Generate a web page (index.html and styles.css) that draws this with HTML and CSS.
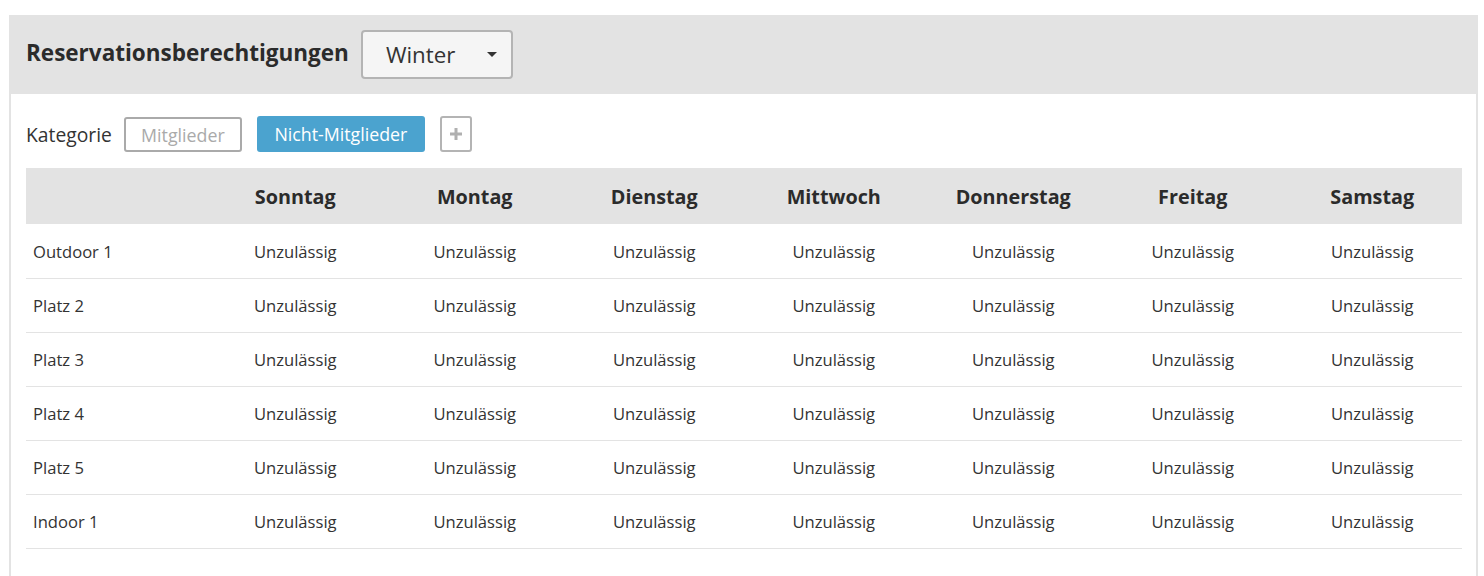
FILE: index.html
```html
<!DOCTYPE html>
<html lang="de">
<head>
<meta charset="utf-8">
<title>Reservationsberechtigungen</title>
<link rel="stylesheet" href="styles.css">
</head>
<body>
<div class="panel">
  <div class="panel-head">
    <h1 class="title">Reservationsberechtigungen</h1>
    <div class="select">
      <span class="select-value">Winter</span>
      <span class="caret"></span>
    </div>
  </div>
  <div class="panel-body">
    <div class="cat-row">
      <span class="cat-label">Kategorie</span>
      <button class="btn btn-outline">Mitglieder</button>
      <button class="btn btn-primary">Nicht-Mitglieder</button>
      <button class="btn btn-add" aria-label="Hinzufügen">
        <svg width="14" height="14" viewBox="0 0 14 14"><path d="M5.5 1h3v4.5H13v3H8.5V13h-3V8.5H1v-3h4.5z" fill="#b0b0b0"/></svg>
      </button>
    </div>
    <table class="grid">
      <thead>
        <tr>
          <th></th><th>Sonntag</th><th>Montag</th><th>Dienstag</th><th>Mittwoch</th><th>Donnerstag</th><th>Freitag</th><th>Samstag</th>
        </tr>
      </thead>
      <tbody>
        <tr><td>Outdoor 1</td><td>Unzulässig</td><td>Unzulässig</td><td>Unzulässig</td><td>Unzulässig</td><td>Unzulässig</td><td>Unzulässig</td><td>Unzulässig</td></tr>
        <tr><td>Platz 2</td><td>Unzulässig</td><td>Unzulässig</td><td>Unzulässig</td><td>Unzulässig</td><td>Unzulässig</td><td>Unzulässig</td><td>Unzulässig</td></tr>
        <tr><td>Platz 3</td><td>Unzulässig</td><td>Unzulässig</td><td>Unzulässig</td><td>Unzulässig</td><td>Unzulässig</td><td>Unzulässig</td><td>Unzulässig</td></tr>
        <tr><td>Platz 4</td><td>Unzulässig</td><td>Unzulässig</td><td>Unzulässig</td><td>Unzulässig</td><td>Unzulässig</td><td>Unzulässig</td><td>Unzulässig</td></tr>
        <tr><td>Platz 5</td><td>Unzulässig</td><td>Unzulässig</td><td>Unzulässig</td><td>Unzulässig</td><td>Unzulässig</td><td>Unzulässig</td><td>Unzulässig</td></tr>
        <tr><td>Indoor 1</td><td>Unzulässig</td><td>Unzulässig</td><td>Unzulässig</td><td>Unzulässig</td><td>Unzulässig</td><td>Unzulässig</td><td>Unzulässig</td></tr>
      </tbody>
    </table>
  </div>
</div>
</body>
</html>
```

FILE: styles.css
```css
html, body {
  margin: 0;
  padding: 0;
  background: #ffffff;
}
body {
  font-family: "Open Sans", "Liberation Sans", sans-serif;
  color: #333333;
  padding: 15px 6px 0 9px;
}
.panel {
  width: 1469px;
}
.panel-head {
  background: #e3e3e3;
  height: 79px;
  display: flex;
  align-items: center;
  padding: 0 0 0 17px;
  box-sizing: border-box;
}
.title {
  margin: 0 12px 4px 0;
  font-size: 22.5px;
  font-weight: 700;
  color: #2b2b2b;
}
.select {
  width: 152px;
  height: 49px;
  box-sizing: border-box;
  border: 2px solid #b4b4b4;
  border-radius: 4px;
  background: #f5f5f5;
  display: flex;
  align-items: center;
  padding: 0 14px 0 23px;
  justify-content: space-between;
  margin-bottom: 1px;
}
.select-value {
  font-size: 22.3px;
  color: #333;
}
.caret {
  width: 0;
  height: 0;
  border-left: 5px solid transparent;
  border-right: 5px solid transparent;
  border-top: 5px solid #333;
}
.panel-body {
  border-left: 2px solid #e3e3e3;
  border-right: 2px solid #e3e3e3;
  padding: 22px 14px 30px 15px;
}
.cat-row {
  display: flex;
  align-items: center;
  height: 36px;
  margin-bottom: 16px;
}
.cat-label {
  font-size: 19.3px;
  color: #333;
  margin-right: 12px;
}
.btn {
  font-family: "Open Sans", "Liberation Sans", sans-serif;
  font-size: 17.8px;
  height: 36px;
  box-sizing: border-box;
  border-radius: 3px;
  cursor: pointer;
  padding: 0;
  display: inline-flex;
  align-items: center;
  justify-content: center;
}
.btn-outline {
  border: 2px solid #aaaaaa;
  background: #ffffff;
  color: #aaaaaa;
  width: 118px;
  height: 35px;
  margin-top: 1px;
  margin-right: 15px;
}
.btn-primary {
  border: none;
  background: #4ba3cf;
  color: #ffffff;
  width: 168px;
  margin-right: 15px;
}
.btn-add {
  border: 2px solid #b4b4b4;
  background: #ffffff;
  width: 32px;
  padding: 0;
}
.grid {
  width: 1436px;
  border-collapse: collapse;
  table-layout: fixed;
}
.grid th {
  background: #e3e3e3;
  height: 56px;
  font-size: 19.8px;
  font-weight: 700;
  color: #2b2b2b;
  text-align: center;
  padding: 1px 0 0 0;
  box-sizing: border-box;
}
.grid td {
  height: 54px;
  font-size: 16.6px;
  color: #333;
  text-align: center;
  border-bottom: 1px solid #e3e3e3;
  padding: 1px 0 0 0;
  box-sizing: border-box;
}
.grid td:first-child {
  text-align: left;
  padding-left: 7px;
}
```
